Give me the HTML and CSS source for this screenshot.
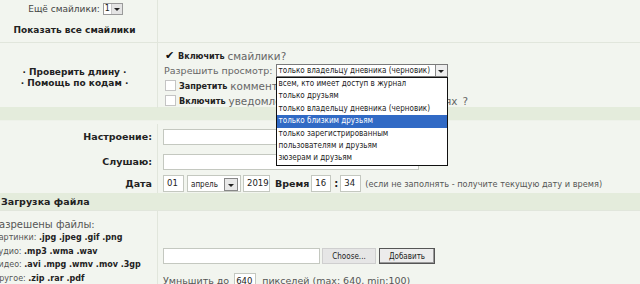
FILE: index.html
```html
<!DOCTYPE html>
<html lang="ru">
<head>
<meta charset="utf-8">
<link rel="stylesheet" href="styles.css">
</head>
<body>
<div class="page">
  <div class="row r-smiles">
    <div class="lcell smiles">
      <div class="more">Ещё смайлики: <span class="sel sel-num"><span class="sel-val">1</span><span class="arr"></span></span></div>
      <div class="showall">Показать все смайлики</div>
    </div>
    <div class="rcell"></div>
  </div>
  <div class="row r-opts">
    <div class="lcell tools">
      <div>· Проверить длину ·</div>
      <div>· Помощь по кодам ·</div>
    </div>
    <div class="rcell opts">
      <div class="opt"><span class="check">✔</span><b>Включить</b> смайлики?</div>
      <div class="opt access">Разрешить просмотр: <span class="sel sel-access"><span class="sel-val">только владельцу дневника (черновик)</span><span class="arr flat"></span>
        <ul class="dropdown">
          <li>всем, кто имеет доступ в журнал</li>
          <li>только друзьям</li>
          <li>только владельцу дневника (черновик)</li>
          <li class="hl">только близким друзьям</li>
          <li>только зарегистрированным</li>
          <li>пользователям и друзьям</li>
          <li>зюзерам и друзьям</li>
        </ul>
      </span></div>
      <div class="opt"><span class="box"></span><b>Запретить</b> комментарии</div>
      <div class="opt notify"><span class="box"></span><b>Включить</b> уведомления о комментариях в записях ?</div>
    </div>
  </div>
  <div class="bar"></div>
  <div class="fields">
    <div class="row frow">
      <div class="lcell flabel">Настроение:</div>
      <div class="rcell"><span class="inp wide"></span></div>
    </div>
    <div class="row frow">
      <div class="lcell flabel">Слушаю:</div>
      <div class="rcell"><span class="inp wide"></span></div>
    </div>
    <div class="row frow date">
      <div class="lcell flabel">Дата</div>
      <div class="rcell dt">
        <span class="inp day">01</span>
        <span class="sel sel-month"><span class="sel-val">апрель</span><span class="arr boxed"></span></span>
        <span class="inp year">2019</span>
        <b class="time-l">Время</b>
        <span class="inp hh">16</span>
        <b class="colon">:</b>
        <span class="inp mm">34</span>
        <span class="hint">(если не заполнять - получите текущую дату и время)</span>
      </div>
    </div>
  </div>
  <div class="bar titled">Загрузка файла</div>
  <div class="row upload">
    <div class="lcell ftypes">
      <div class="allowed">Разрешены файлы:</div>
      <div class="ft">Картинки: <b>.jpg .jpeg .gif .png</b></div>
      <div class="ft">Аудио: <b>.mp3 .wma .wav</b></div>
      <div class="ft">Видео: <b>.avi .mpg .wmv .mov .3gp</b></div>
      <div class="ft">Другое: <b>.zip .rar .pdf</b></div>
    </div>
    <div class="rcell up">
      <div class="filerow"><span class="inp file"></span><span class="btn choose">Choose...</span><span class="btn add">Добавить</span></div>
      <div class="resize">Умньшить до <span class="inp px">640</span> пикселей (max: 640, min:100)</div>
    </div>
  </div>
</div>
</body>
</html>
```
FILE: styles.css
```css
html, body {
  margin: 0;
  padding: 0;
  background: #f2f5ef;
  overflow: hidden;
}
body {
  font-family: "DejaVu Sans", Verdana, sans-serif;
  font-size: 9px;
  color: #555;
}
.page {
  margin-left: -8px;
  width: 660px;
}
.row {
  display: grid;
  grid-template-columns: 166px 1fr;
}
.lcell {
  border-right: 1px solid #e1e6dc;
  box-sizing: border-box;
}
b { color: #222; }

/* smiles row */
.r-smiles { height: 42px; border-bottom: 1px solid #e1e6dc; }
.smiles { text-align: center; color: #444; }
.more { padding-top: 2px; height: 14px; line-height: 14px; display: flex; justify-content: center; align-items: center; gap: 3px; padding-left: 2px; }
.showall { margin-top: 9px; font-weight: bold; color: #222; }

.sel {
  display: inline-flex;
  align-items: stretch;
  background: #fff;
  border: 1px solid #9a9a9a;
  box-sizing: border-box;
  position: relative;
  color: #222;
}
.sel-num { width: 20px; height: 12px; font-size: 8px; line-height: 10px; }
.sel-num .sel-val { flex: 1; padding-left: 1px; text-align: left; }
.arr {
  width: 10px;
  background: #e4e4e4;
  border-left: 1px solid #c8c8c8;
  position: relative;
}
.arr::after {
  content: "";
  position: absolute;
  left: 50%;
  top: 50%;
  margin-left: -3px;
  margin-top: -1px;
  border-left: 3px solid transparent;
  border-right: 3px solid transparent;
  border-top: 3px solid #222;
}

/* options row */
.r-opts { height: 64px; }
.tools {
  display: flex;
  flex-direction: column;
  justify-content: center;
  align-items: center;
  font-weight: bold;
  color: #222;
  line-height: 11px;
  padding-top: 5px;
}
.opts { padding: 5px 0 0 6px; font-size: 10.4px; color: #666; }
.opt { height: 15px; display: flex; align-items: center; white-space: nowrap; }
.opt b { margin-right: 3px; font-size: 9px; font-family: "DejaVu Sans Condensed", "DejaVu Sans", sans-serif; font-stretch: condensed; }
.notify { word-spacing: 1.8px; }
.check { width: 13px; font-size: 11px; color: #111; margin-left: 1px; line-height: 10px; }
.box {
  width: 11px;
  height: 11px;
  border: 1px solid #c4c4c4;
  background: #fff;
  margin: 0 3px 0 1px;
  box-sizing: border-box;
}
.access { font-size: 9.5px; }
.sel-access {
  width: 172px;
  height: 13px;
  margin-left: 3px;
  font-family: "DejaVu Sans Condensed", "DejaVu Sans", sans-serif;
  font-stretch: condensed;
  font-size: 8px;
  line-height: 11px;
  border-color: #7a7a7a;
}
.sel-access .sel-val { flex: 1; padding-left: 2px; border-right: 1px solid #888; }
.arr.flat { width: 11px; border-left: none; background: #eee; }
.dropdown {
  position: absolute;
  top: 12px;
  left: -1px;
  width: 172px;
  box-sizing: border-box;
  margin: 0;
  padding: 0;
  list-style: none;
  background: #fff;
  border: 1px solid #111;
  z-index: 5;
}
.dropdown li {
  height: 12.4px;
  line-height: 12.4px;
  padding-left: 2px;
  color: #222;
}
.dropdown li.hl { background: #316ac5; color: #fff; }

/* bars */
.bar {
  height: 13px;
  background: #e4ecdc;
  border-bottom: 1px solid #eef2ea;
}
.bar.titled {
  height: 17px;
  line-height: 17px;
  padding-left: 9px;
  font-weight: bold;
  color: #222;
  font-size: 9.5px;
  border-bottom: 1px solid #e1e6dc;
}

/* fields */
.fields { padding-top: 3px; }
.frow { height: 25px; }
.frow.date { height: 19px; }
.flabel {
  font-weight: bold;
  color: #222;
  font-size: 9.5px;
  text-align: right;
  padding-right: 5px;
  display: flex;
  align-items: center;
  justify-content: flex-end;
}
.frow .rcell { display: flex; align-items: center; padding-left: 5px; }
.inp {
  display: inline-block;
  background: #fff;
  border: 1px solid #c4c8c0;
  box-sizing: border-box;
  color: #222;
  font-size: 8.5px;
  padding-left: 3px;
  line-height: 15px;
}
.inp.wide { width: 256px; height: 16px; }
.dt { gap: 0; font-size: 8.5px; }
.inp.day { width: 21px; height: 17px; }
.sel-month {
  width: 54px;
  height: 17px;
  margin-left: 3px;
  font-family: "DejaVu Sans Condensed", "DejaVu Sans", sans-serif;
  font-stretch: condensed;
  font-size: 8px;
  line-height: 17px;
  border-color: #c4c8c0;
}
.sel-month .sel-val { flex: 1; padding-left: 3px; }
.arr.boxed {
  width: 12px;
  height: 11px;
  margin: 2px 2px 0 0;
  border: 1px solid #888;
  background: #e8e8e8;
}
.inp.year { width: 27px; height: 17px; margin-left: 2px; }
.time-l { margin-left: 5px; font-size: 9.5px; }
.inp.hh { width: 20px; height: 17px; margin-left: 2px; }
.colon { margin: 0 2px 0 3px; font-size: 10px; }
.inp.mm { width: 21px; height: 17px; }
.hint { margin-left: 4px; font-size: 8.2px; color: #555; white-space: nowrap; }

/* upload */
.upload { height: 80px; }
.ftypes { padding-left: 1px; color: #555; }
.allowed { font-size: 10px; margin-top: 7px; line-height: 13px; }
.ft { font-size: 8px; line-height: 13.5px; white-space: nowrap; }
.ft:first-of-type { margin-top: 1px; }
.ft b { color: #222; }
.up { padding: 37px 0 0 5px; }
.filerow { display: flex; align-items: center; height: 16px; }
.inp.file { width: 157px; height: 16px; }
.btn {
  display: inline-flex;
  align-items: center;
  justify-content: center;
  height: 16px;
  box-sizing: border-box;
  font-family: "DejaVu Sans Condensed", "DejaVu Sans", sans-serif;
  font-stretch: condensed;
  font-size: 8px;
  color: #222;
}
.choose { width: 54px; margin-left: 2px; background: #e6e6e6; border: 1px solid #cfcfcf; }
.add { width: 56px; margin-left: 3px; background: #ececec; border: 1px solid #555; box-shadow: inset -1px -1px 0 #999; }
.resize { margin-top: 9px; font-size: 9.5px; white-space: nowrap; display: flex; align-items: center; }
.inp.px { width: 22px; height: 15px; margin: 0 6px 0 5px; padding-left: 1px; }
```
